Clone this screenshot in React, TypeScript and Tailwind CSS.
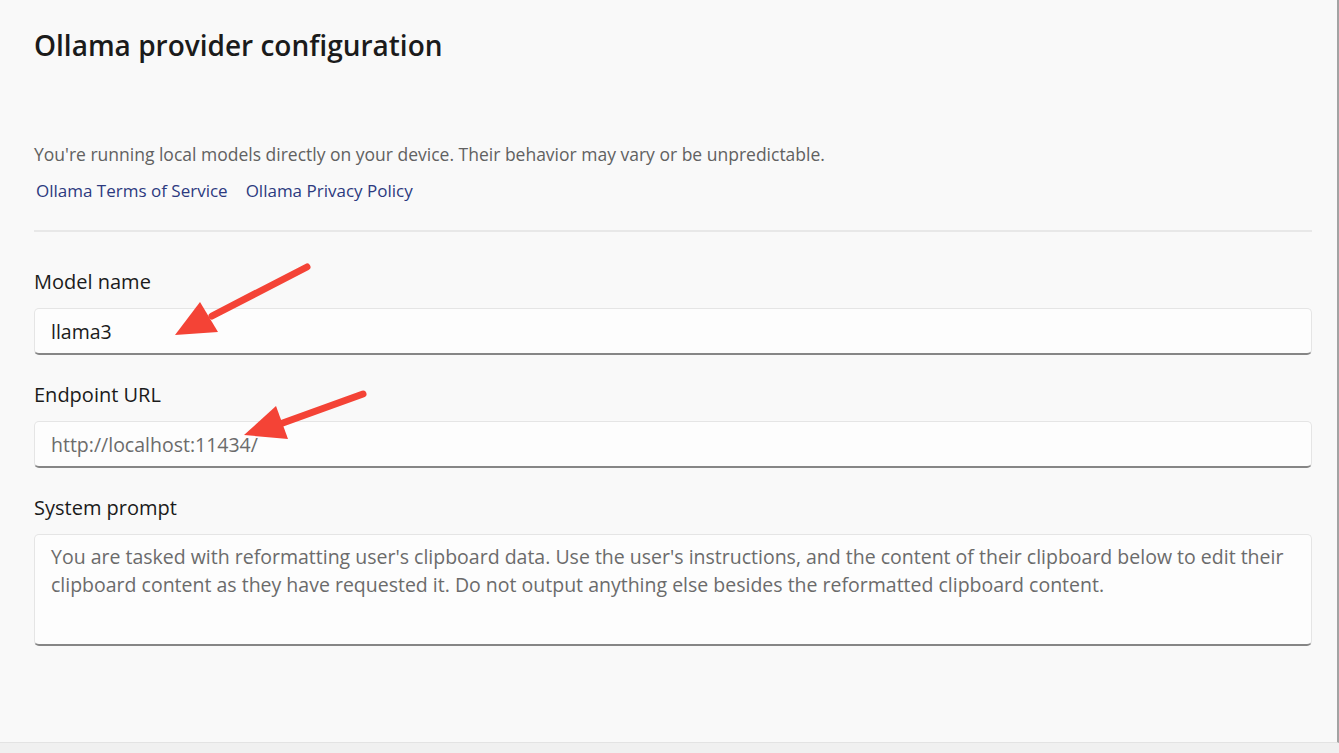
import React from "react";

const font = { fontFamily: '"Open Sans", "Noto Sans", sans-serif' };

const promptText =
  "You are tasked with reformatting user's clipboard data. Use the user's instructions, and the content of their clipboard below to edit their clipboard content as they have requested it. Do not output anything else besides the reformatted clipboard content.";

// red annotation arrows drawn over the form
const Arrows: React.FC = () => (
  <svg
    className="absolute left-0 top-0 pointer-events-none"
    width={1339}
    height={753}
    viewBox="0 0 1339 753"
  >
    <line x1={307} y1={267} x2={212} y2={316} stroke="#f44336" strokeWidth={7} strokeLinecap="round" />
    <polygon points="175,335 200,302 218,332" fill="#f44336" />
    <line x1={363} y1={394} x2={280} y2={424} stroke="#f44336" strokeWidth={7} strokeLinecap="round" />
    <polygon points="244,435 276,406 288,439" fill="#f44336" />
  </svg>
);

const fieldClass =
  "w-full bg-[#fdfdfd] border border-[#e5e5e5] border-b-2 border-b-[#868686] rounded-[5px] outline-none pl-[16px] pr-4";

const App: React.FC = () => {
  return (
    <div className="relative w-full h-[753px] bg-[#f0f0f0] flex flex-col overflow-hidden" style={font}>
      <div className="h-[743px] bg-[#f9f9f9] border-r-2 border-r-[#a3a3a3] border-b border-b-[#e3e3e3] pl-[34px] pr-[25px]">
        <h1 className="mt-[27px] text-[28px] leading-[36px] font-semibold text-[#1b1b1b]">
          Ollama provider configuration
        </h1>

        <p className="mt-[80px] text-[17.5px] leading-[22px] text-[#616161]">
          You're running local models directly on your device. Their behavior may vary or be unpredictable.
        </p>

        <div className="mt-[14px] pl-[2px] flex gap-[18px] text-[17px] leading-[24px] text-[#2c3a80]">
          <a href="#">Ollama Terms of Service</a>
          <a href="#">Ollama Privacy Policy</a>
        </div>

        <div className="mt-[27px] border-t-2 border-[#e8e8e8]" />

        <label className="block mt-[36px] text-[20px] leading-[28px] text-[#1b1b1b]">Model name</label>
        <input
          className={`${fieldClass} mt-[12px] h-[47px] text-[19.5px] text-[#1b1b1b]`}
          style={font}
          defaultValue="llama3"
        />

        <label className="block mt-[26px] text-[20px] leading-[28px] text-[#1b1b1b]">Endpoint URL</label>
        <input
          className={`${fieldClass} mt-[12px] h-[47px] text-[19.5px] text-[#6b6b6b]`}
          style={font}
          defaultValue="http://localhost:11434/"
        />

        <label className="block mt-[26px] text-[20px] leading-[28px] text-[#1b1b1b]">System prompt</label>
        <textarea
          className={`${fieldClass} block mt-[12px] h-[112px] pt-[8px] resize-none text-[19.5px] leading-[28px] text-[#6b6b6b]`}
          style={font}
          defaultValue={promptText}
        />
      </div>
      <Arrows />
    </div>
  );
};

export default App;
